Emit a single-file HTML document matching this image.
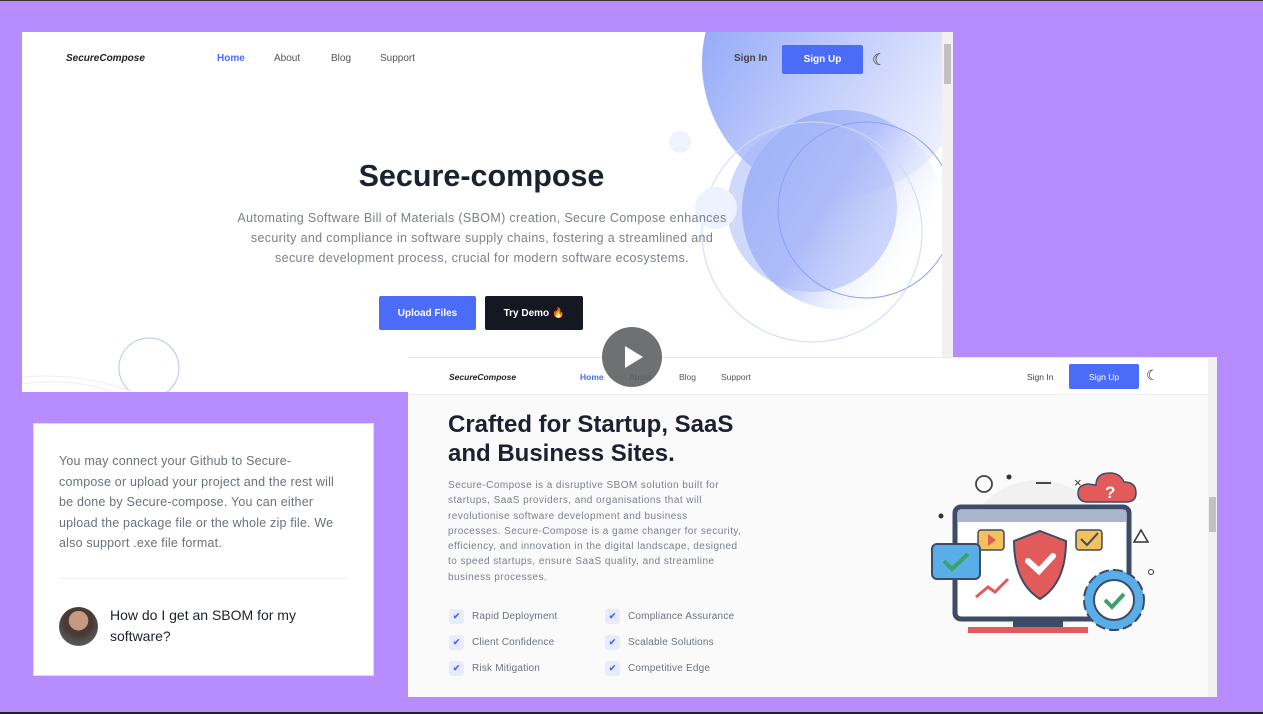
<!DOCTYPE html>
<html><head><meta charset="utf-8"><style>
*{margin:0;padding:0;box-sizing:border-box}
body{width:1263px;height:714px;background:#b68cfe;position:relative;overflow:hidden;font-family:"Liberation Sans",Arial,sans-serif}
.a{position:absolute}
.nav{font-size:10px;color:#555}
.btn{position:absolute;color:#fff;font-size:10px;font-weight:bold;display:flex;align-items:center;justify-content:center;border-radius:2px}
.chk{position:absolute;width:15px;height:15px;background:#e8ebfd;border-radius:3px;color:#4a6cf7;font-size:9px;text-align:center;line-height:15px;font-weight:bold}
.li{position:absolute;font-size:10px;color:#6b7280;letter-spacing:.2px}
</style></head><body>
<div class="a" style="left:0;top:0;width:1263px;height:1px;background:#333"></div>
<div class="a" style="left:0;top:712px;width:1263px;height:2px;background:#222"></div>

<!-- window 1 -->
<div class="a" style="left:22px;top:32px;width:931px;height:360px;background:#fff;overflow:hidden">
  <svg class="a" style="left:0;top:0" width="931" height="360">
    <defs>
      <linearGradient id="g1" x1="0" y1="0.2" x2="1" y2="0.8"><stop offset="0" stop-color="#8ea4f8"/><stop offset="1" stop-color="#f4f6ff"/></linearGradient>
      <linearGradient id="g2" x1="0.1" y1="0.2" x2="0.9" y2="0.7"><stop offset="0" stop-color="#9aaef8"/><stop offset="0.45" stop-color="#b3c1fa"/><stop offset="1" stop-color="#ffffff" stop-opacity="0"/></linearGradient>
    </defs>
    <circle cx="814" cy="31" r="134" fill="url(#g1)"/>
    <circle cx="820" cy="178" r="100" fill="url(#g2)"/>
    <circle cx="790" cy="175" r="85" fill="#a9b8f8" opacity="0.55"/>
    <circle cx="844" cy="178" r="88" fill="none" stroke="#8aa0f5" stroke-width="1"/>
    <circle cx="790" cy="200" r="110" fill="none" stroke="#d0d8fb" stroke-width="1"/>
    <circle cx="694" cy="176" r="21" fill="#eef1fe"/>
    <circle cx="658" cy="110" r="11" fill="#f0f2fe"/>
    <circle cx="127" cy="336" r="30" fill="none" stroke="#b7c4fa" stroke-width="1"/>
    <path d="M0 345 Q60 340 110 360" stroke="#eee" fill="none"/>
    <path d="M0 352 Q50 345 90 360" stroke="#eee" fill="none"/>
  </svg>
  <div class="a" style="left:44px;top:21px;font-size:10px;font-weight:bold;font-style:italic;color:#222">SecureCompose</div>
  <div class="a nav" style="left:195px;top:21px;color:#4a6cf7;font-weight:bold">Home</div>
  <div class="a nav" style="left:252px;top:21px">About</div>
  <div class="a nav" style="left:309px;top:21px">Blog</div>
  <div class="a nav" style="left:358px;top:21px">Support</div>
  <div class="a nav" style="left:712px;top:21px;color:#444;font-weight:bold">Sign In</div>
  <div class="btn" style="left:760px;top:13px;width:81px;height:29px;background:#4a6cf7">Sign Up</div>
  <div class="a" style="left:850px;top:18px;font-size:16px;color:#222">☾</div>
  <div class="a" style="left:0;top:127px;width:919px;text-align:center;font-size:30.5px;font-weight:bold;color:#1d2030">Secure-compose</div>
  <div class="a" style="left:160px;top:176px;width:600px;text-align:center;font-size:12.5px;line-height:20px;color:#7a7f8c;letter-spacing:.35px">Automating Software Bill of Materials (SBOM) creation, Secure Compose enhances<br>security and compliance in software supply chains, fostering a streamlined and<br>secure development process, crucial for modern software ecosystems.</div>
  <div class="btn" style="left:357px;top:264px;width:97px;height:34px;background:#4a6cf7">Upload Files</div>
  <div class="btn" style="left:463px;top:264px;width:98px;height:34px;background:#151822">Try Demo 🔥</div>
  <div class="a" style="left:920px;top:0;width:11px;height:360px;background:#f1f1f1"></div>
  <div class="a" style="left:922px;top:12px;width:7px;height:40px;background:#c1c1c1"></div>
</div>

<!-- left card -->
<div class="a" style="left:33px;top:423px;width:341px;height:253px;background:#fff;border:1px solid #ddd">
  <div class="a" style="left:25px;top:27px;width:310px;font-size:12.5px;line-height:20.5px;color:#6b7080;letter-spacing:.2px">You may connect your Github to Secure-<br>compose or upload your project and the rest will<br>be done by Secure-compose. You can either<br>upload the package file or the whole zip file. We<br>also support .exe file format.</div>
  <div class="a" style="left:25px;top:154px;width:288px;height:1px;background:#eee"></div>
  <div class="a" style="left:25px;top:183px;width:39px;height:39px;border-radius:50%;background:radial-gradient(circle at 50% 35%,#c49a80 0 30%,#4a3a35 31% 45%,#555 70%)"></div>
  <div class="a" style="left:76px;top:181px;width:230px;font-size:14px;line-height:21px;color:#1d2030">How do I get an SBOM for my<br>software?</div>
</div>

<!-- window 2 -->
<div class="a" style="left:408px;top:357px;width:809px;height:340px;background:#fafafa;overflow:hidden">
  <div class="a" style="left:0;top:0;width:800px;height:38px;background:#fff;border-bottom:1px solid #eee;border-top:1px solid #e8e8e8"></div>
  <div class="a" style="left:41px;top:15px;font-size:8.5px;font-weight:bold;font-style:italic;color:#222">SecureCompose</div>
  <div class="a" style="left:172px;top:15px;font-size:8.5px;color:#4a6cf7;font-weight:bold">Home</div>
  <div class="a" style="left:221px;top:15px;font-size:8.5px;color:#555">About</div>
  <div class="a" style="left:271px;top:15px;font-size:8.5px;color:#555">Blog</div>
  <div class="a" style="left:313px;top:15px;font-size:8.5px;color:#555">Support</div>
  <div class="a" style="left:619px;top:15px;font-size:8.5px;color:#444">Sign In</div>
  <div class="btn" style="left:661px;top:7px;width:70px;height:25px;background:#4a6cf7;font-weight:normal;font-size:8.5px">Sign Up</div>
  <div class="a" style="left:738px;top:10px;font-size:14px;color:#222">☾</div>
  <div class="a" style="left:40px;top:53px;font-size:24px;line-height:29px;font-weight:bold;color:#1d2030;width:340px">Crafted for Startup, SaaS<br>and Business Sites.</div>
  <div class="a" style="left:40px;top:121px;width:330px;font-size:10px;line-height:15.3px;color:#7a7f8c;letter-spacing:.45px">Secure-Compose is a disruptive SBOM solution built for<br>startups, SaaS providers, and organisations that will<br>revolutionise software development and business<br>processes. Secure-Compose is a game changer for security,<br>efficiency, and innovation in the digital landscape, designed<br>to speed startups, ensure SaaS quality, and streamline<br>business processes.</div>
  <div class="chk" style="left:41px;top:252px">✔</div><div class="li" style="left:64px;top:254px">Rapid Deployment</div>
  <div class="chk" style="left:197px;top:252px">✔</div><div class="li" style="left:220px;top:254px">Compliance Assurance</div>
  <div class="chk" style="left:41px;top:278px">✔</div><div class="li" style="left:64px;top:280px">Client Confidence</div>
  <div class="chk" style="left:197px;top:278px">✔</div><div class="li" style="left:220px;top:280px">Scalable Solutions</div>
  <div class="chk" style="left:41px;top:304px">✔</div><div class="li" style="left:64px;top:306px">Risk Mitigation</div>
  <div class="chk" style="left:197px;top:304px">✔</div><div class="li" style="left:220px;top:306px">Competitive Edge</div>
  <!-- illustration -->
  <svg class="a" style="left:500px;top:110px" width="260" height="170">
    <circle cx="130" cy="88" r="75" fill="#f1f1f1"/>
    <circle cx="76" cy="17" r="8" fill="none" stroke="#444" stroke-width="1.8"/>
    <circle cx="101" cy="10" r="2.5" fill="#333"/>
    <line x1="128" y1="16" x2="143" y2="16" stroke="#333" stroke-width="1.8"/>
    <text x="166" y="20" font-size="13" fill="#333" font-family="Liberation Sans">×</text>
    <rect x="47" y="40" width="174" height="112" rx="6" fill="#fff" stroke="#3d4b66" stroke-width="5"/>
    <rect x="50" y="43" width="168" height="12" fill="#aab4cc"/>
    <rect x="60" y="160" width="120" height="6" fill="#e25b5b"/>
    <rect x="105" y="152" width="50" height="8" fill="#3d4b66"/>
    <rect x="70" y="63" width="26" height="20" rx="3" fill="#f5c15a" stroke="#3d4b66" stroke-width="1.5"/>
    <path d="M80 67 L88 73 L80 79Z" fill="#e25b5b"/>
    <rect x="168" y="63" width="26" height="20" rx="3" fill="#f5c15a" stroke="#3d4b66" stroke-width="1.5"/>
    <path d="M173 72 L179 78 L190 66" stroke="#3d4b66" stroke-width="2" fill="none"/>
    <rect x="24" y="77" width="48" height="35" rx="5" fill="#5aaee8" stroke="#3d4b66" stroke-width="2"/>
    <path d="M36 94 L44 102 L60 87" stroke="#3aa36a" stroke-width="4" fill="none"/>
    <path d="M132 64 L158 74 Q158 116 132 132 Q106 116 106 74Z" fill="#e25b5b" stroke="#3d4b66" stroke-width="2"/>
    <path d="M120 94 L131 104 L145 89" stroke="#fff" stroke-width="6" fill="none" stroke-linecap="round"/>
    <path d="M68 130 L80 120 L87 125 L100 112" stroke="#e25b5b" stroke-width="3" fill="none"/>
    <path d="M188 18 q0-12 14-12 q10 0 14 9 q12 0 12 11 q0 9-10 9 h-38 q-10 0-10-9 q0-8 10-9z" fill="#e25b5b" stroke="#3d4b66" stroke-width="1.5"/>
    <text x="197" y="31" font-size="17" font-weight="bold" fill="#fff" font-family="Liberation Sans">?</text>
    <circle cx="206" cy="133" r="30" fill="#5aaee8" stroke="#3d4b66" stroke-width="2" stroke-dasharray="10 4"/>
    <circle cx="206" cy="133" r="20" fill="#fff" stroke="#3d4b66" stroke-width="2"/>
    <path d="M197 133 L204 140 L216 127" stroke="#3aa36a" stroke-width="4" fill="none"/>
    <path d="M233 63 L240 75 L226 75Z" fill="none" stroke="#333" stroke-width="1.5"/>
    <circle cx="243" cy="105" r="2.5" fill="none" stroke="#333"/>
    <circle cx="33" cy="49" r="2.5" fill="#333"/>
  </svg>
  <div class="a" style="left:800px;top:0;width:9px;height:340px;background:#f1f1f1"></div>
  <div class="a" style="left:801px;top:140px;width:7px;height:35px;background:#c1c1c1"></div>
</div>

<!-- play button -->
<div class="a" style="left:602px;top:327px;width:60px;height:60px;border-radius:50%;background:rgba(90,92,95,0.88)"></div>
<svg class="a" style="left:622px;top:344px" width="24" height="26"><path d="M3 2 L21 13 L3 24Z" fill="#fff"/></svg>
</body></html>
